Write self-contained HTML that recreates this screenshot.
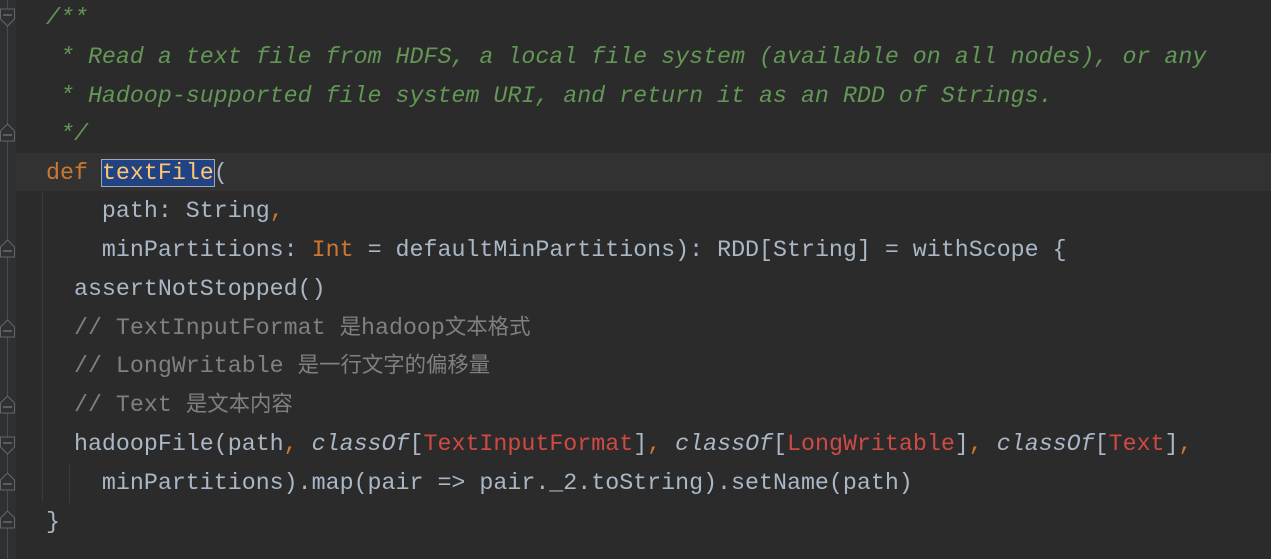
<!DOCTYPE html>
<html><head><style>
body{margin:0;width:1271px;height:559px;background:#2b2b2b;overflow:hidden;position:relative;font-family:"Liberation Mono","Noto Sans CJK SC",monospace;font-size:23.3px;color:#a9b7c6}
.g{position:absolute;left:0;top:0;width:16px;height:559px;background:#2f3033}
.gl{position:absolute;left:7px;top:0;width:1px;height:559px;background:#4a4b4e}
.cur{position:absolute;left:16px;top:153px;width:1255px;height:38px;background:#323232}
.l{position:absolute;left:46px;white-space:pre;height:38.75px;line-height:38.75px}
.c{color:#629755;font-style:italic}
.k{color:#cc7832}
.r{color:#d04a44}
.gr{color:#808080}
.i{font-style:italic}
.z{font-size:21.4px}
.sel{background:#214283;outline:1.5px solid #a0a8b8}
.ig{position:absolute;width:1px;background:#3b3b3b}
.f{position:absolute;left:0;width:16px;height:20px}
</style></head><body>
<div class="g"></div><div class="gl"></div>
<div class="cur"></div>
<div class="ig" style="left:42px;top:192px;height:310px"></div>
<div class="ig" style="left:69px;top:463px;height:40px"></div>
<svg class="f" style="top:8px" viewBox="0 0 16 20"><path d="M0.5 1H14.5V11L7.5 18L0.5 11Z" fill="#2f3033" stroke="#666"/><path d="M3 7H12" stroke="#888"/></svg>
<svg class="f" style="top:122px" viewBox="0 0 16 20"><path d="M0.5 19H14.5V9L7.5 2L0.5 9Z" fill="#2f3033" stroke="#666"/><path d="M3 13H12" stroke="#888"/></svg>
<svg class="f" style="top:238px" viewBox="0 0 16 20"><path d="M0.5 19H14.5V9L7.5 2L0.5 9Z" fill="#2f3033" stroke="#666"/><path d="M3 13H12" stroke="#888"/></svg>
<svg class="f" style="top:318px" viewBox="0 0 16 20"><path d="M0.5 19H14.5V9L7.5 2L0.5 9Z" fill="#2f3033" stroke="#666"/><path d="M3 13H12" stroke="#888"/></svg>
<svg class="f" style="top:394px" viewBox="0 0 16 20"><path d="M0.5 19H14.5V9L7.5 2L0.5 9Z" fill="#2f3033" stroke="#666"/><path d="M3 13H12" stroke="#888"/></svg>
<svg class="f" style="top:436px" viewBox="0 0 16 20"><path d="M0.5 1H14.5V11L7.5 18L0.5 11Z" fill="#2f3033" stroke="#666"/><path d="M3 7H12" stroke="#888"/></svg>
<svg class="f" style="top:471px" viewBox="0 0 16 20"><path d="M0.5 19H14.5V9L7.5 2L0.5 9Z" fill="#2f3033" stroke="#666"/><path d="M3 13H12" stroke="#888"/></svg>
<svg class="f" style="top:509px" viewBox="0 0 16 20"><path d="M0.5 19H14.5V9L7.5 2L0.5 9Z" fill="#2f3033" stroke="#666"/><path d="M3 13H12" stroke="#888"/></svg>

<div class="l c" style="top:-1px">/**</div>
<div class="l c" style="top:37.5px"> * Read a text file from HDFS, a local file system (available on all nodes), or any</div>
<div class="l c" style="top:76.5px"> * Hadoop-supported file system URI, and return it as an RDD of Strings.</div>
<div class="l c" style="top:115px"> */</div>
<div class="l" style="top:153.5px"><span class="k">def</span> <span class="sel" style="color:#ffc66d">textFile</span>(</div>
<div class="l" style="top:192px">    path: String<span class="k">,</span></div>
<div class="l" style="top:231px">    minPartitions: <span class="k">Int</span> = defaultMinPartitions): RDD[String] = withScope {</div>
<div class="l" style="top:270px">  assertNotStopped()</div>
<div class="l gr" style="top:308.5px">  // TextInputFormat <span class="z">是</span>hadoop<span class="z">文本格式</span></div>
<div class="l gr" style="top:347px">  // LongWritable <span class="z">是一行文字的偏移量</span></div>
<div class="l gr" style="top:386px">  // Text <span class="z">是文本内容</span></div>
<div class="l" style="top:425px">  hadoopFile(path<span class="k">,</span> <span class="i">classOf</span>[<span class="r">TextInputFormat</span>]<span class="k">,</span> <span class="i">classOf</span>[<span class="r">LongWritable</span>]<span class="k">,</span> <span class="i">classOf</span>[<span class="r">Text</span>]<span class="k">,</span></div>
<div class="l" style="top:464px">    minPartitions).map(pair =&gt; pair._2.toString).setName(path)</div>
<div class="l" style="top:502.5px">}</div>
</body></html>
